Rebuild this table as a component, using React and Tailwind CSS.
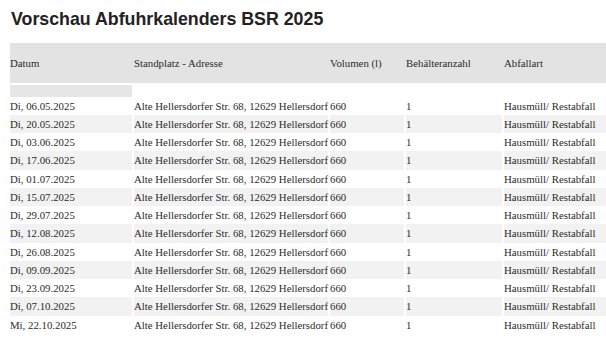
import React from 'react';

const dates = [
  'Di, 06.05.2025', 'Di, 20.05.2025', 'Di, 03.06.2025', 'Di, 17.06.2025', 'Di, 01.07.2025',
  'Di, 15.07.2025', 'Di, 29.07.2025', 'Di, 12.08.2025', 'Di, 26.08.2025', 'Di, 09.09.2025',
  'Di, 23.09.2025', 'Di, 07.10.2025', 'Mi, 22.10.2025',
];

const rows = dates.map(d => ({
  date: d,
  address: 'Alte Hellersdorfer Str. 68, 12629 Hellersdorf',
  volume: '660',
  count: '1',
  type: 'Hausmüll/ Restabfall',
}));

export default function App() {
  return (
    <div className="bg-white text-[#2b2b2b] w-[606px] h-[341px] overflow-hidden">
      <h1 className="pt-[6px] pl-[11px] font-['Liberation_Sans',Arial,sans-serif] font-bold text-[17.8px] leading-normal text-[#222] whitespace-nowrap">
        Vorschau Abfuhrkalenders BSR 2025
      </h1>
      <table className="mt-[10px] ml-[10px] w-[620px] table-fixed border-collapse font-['Liberation_Serif','Times_New_Roman',serif] text-[10.8px] text-left">
        <colgroup>
          <col className="w-[123px]" />
          <col className="w-[196px]" />
          <col className="w-[76px]" />
          <col className="w-[98px]" />
          <col className="w-[127px]" />
        </colgroup>
        <thead>
          <tr className="bg-[#e3e3e3] h-[40px]">
            <th className="font-normal p-0 border-r-2 border-[#e3e3e3]">Datum</th>
            <th className="font-normal p-0 border-r-2 border-[#e3e3e3]">Standplatz - Adresse</th>
            <th className="font-normal p-0 border-r-2 border-[#e3e3e3]">Volumen (l)</th>
            <th className="font-normal p-0 border-r-2 border-[#e3e3e3]">Behälteranzahl</th>
            <th className="font-normal p-0">Abfallart</th>
          </tr>
        </thead>
        <tbody>
          <tr className="h-[14px]">
            <td className="p-0 pt-[2px] border-r-2 border-white"><div className="h-[12px] bg-[#e6e6e6]" /></td>
            <td colSpan={4} />
          </tr>
          {rows.map((r, i) => {
            const stripe = i % 2 === 1 ? 'bg-[#f2f2f2]' : '';
            return (
              <tr key={r.date} className="h-[18.25px] whitespace-nowrap">
                <td className={`p-0 border-r-2 border-white ${stripe}`}>{r.date}</td>
                <td className={`p-0 border-r-2 border-white ${stripe}`}>{r.address}</td>
                <td className={`p-0 border-r-2 border-white ${stripe}`}>{r.volume}</td>
                <td className={`p-0 border-r-2 border-white ${stripe}`}>{r.count}</td>
                <td className={`p-0 ${stripe}`}>{r.type}</td>
              </tr>
            );
          })}
        </tbody>
      </table>
    </div>
  );
}
